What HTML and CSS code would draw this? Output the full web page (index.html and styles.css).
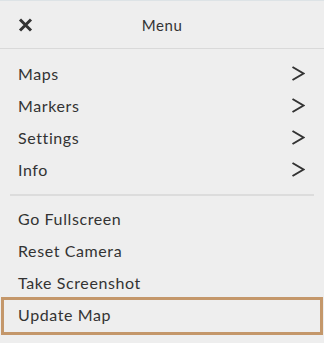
FILE: index.html
```html
<!DOCTYPE html>
<html>
<head>
  <meta charset="UTF-8">
  <title>Menu</title>
  <link rel="stylesheet" href="styles.css">
</head>
<body>
  <div class="menu">
    <div class="menu-header">
      <button class="close-btn" aria-label="Close">
        <svg width="15" height="14" viewBox="0 0 15 14">
          <path d="M2 1.5 L13 12.5 M13 1.5 L2 12.5" stroke="#333" stroke-width="3" stroke-linecap="butt" fill="none"/>
        </svg>
      </button>
      <div class="menu-title">Menu</div>
      <div></div>
    </div>

    <div class="menu-group">
      <div class="menu-item">Maps<span class="chevron"><svg width="14" height="15" viewBox="0 0 14 15"><path d="M1.5 1 L12.5 7.5 L1.5 14" stroke="#333" stroke-width="2" fill="none"/></svg></span></div>
      <div class="menu-item">Markers<span class="chevron"><svg width="14" height="15" viewBox="0 0 14 15"><path d="M1.5 1 L12.5 7.5 L1.5 14" stroke="#333" stroke-width="2" fill="none"/></svg></span></div>
      <div class="menu-item">Settings<span class="chevron"><svg width="14" height="15" viewBox="0 0 14 15"><path d="M1.5 1 L12.5 7.5 L1.5 14" stroke="#333" stroke-width="2" fill="none"/></svg></span></div>
      <div class="menu-item">Info<span class="chevron"><svg width="14" height="15" viewBox="0 0 14 15"><path d="M1.5 1 L12.5 7.5 L1.5 14" stroke="#333" stroke-width="2" fill="none"/></svg></span></div>
    </div>

    <div class="separator"></div>

    <div class="menu-group">
      <div class="menu-item">Go Fullscreen</div>
      <div class="menu-item">Reset Camera</div>
      <div class="menu-item">Take Screenshot</div>
      <div class="menu-item selected">Update Map</div>
    </div>
  </div>
</body>
</html>
```

FILE: styles.css
```css
body {
  margin: 0;
  background-color: #eeeeee;
  font-family: Lato, "Noto Sans", sans-serif;
  color: #333;
  letter-spacing: 0.6px;
}
.menu {
  border-top: 1px solid #dde3e6;
  height: 342px;
  background-color: #eeeeee;
}
.menu-header {
  height: 47px;
  border-bottom: 1px solid #d9d9d9;
  padding: 0 18px;
  display: grid;
  grid-template-columns: 1fr auto 1fr;
  align-items: center;
}
.close-btn {
  background: none;
  border: none;
  padding: 0;
  width: 15px;
  height: 14px;
  display: flex;
  cursor: pointer;
}
.menu-title {
  font-size: 15px;
  padding-top: 1px;
}
.menu-group {
  padding: 10px 4px 0;
}
.menu-item {
  box-sizing: border-box;
  height: 32px;
  padding: 0 14px 3px;
  display: flex;
  align-items: center;
  justify-content: space-between;
  font-size: 16px;
}
.chevron {
  display: flex;
  margin-right: 1px;
}
.selected {
  outline: 3px solid #c4976a;
}
.separator {
  height: 2px;
  background-color: #dcdcdc;
  margin: 7px 10px -2px;
}
```
